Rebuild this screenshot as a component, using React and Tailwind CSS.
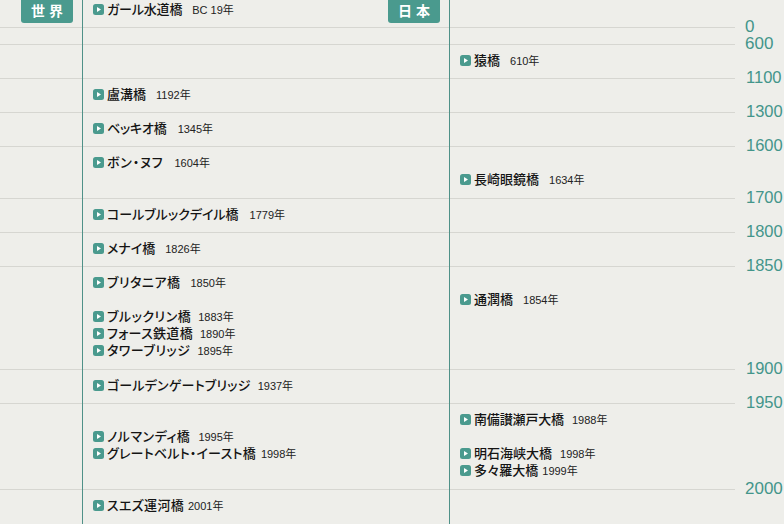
import React from "react";

const num = "ml-[10px] text-[17px]";
const one = "ml-[11px] text-[16.5px]";

const rows = [
  { h: "h-[28px]", year: "0", yc: num, world: { pt: "pt-[2px]", items: [{ name: "ガール水道橋", year: "BC 19年", ml: "ml-[10px]", tr: "tracking-[-0.2px]" }] }, badge: true },
  { h: "h-[17px]", year: "600", yc: num },
  { h: "h-[34px]", year: "1100", yc: one, japan: { pt: "pt-[8px]", items: [{ name: "猿橋", year: "610年", ml: "ml-[10px]" }] } },
  { h: "h-[34px]", year: "1300", yc: one, world: { pt: "pt-[8px]", items: [{ name: "盧溝橋", year: "1192年", ml: "ml-[10px]" }] } },
  { h: "h-[34px]", year: "1600", yc: one, world: { pt: "pt-[8px]", items: [{ name: "ベッキオ橋", year: "1345年", ml: "ml-[11px]", tr: "tracking-[-0.2px]" }] } },
  {
    h: "h-[52px]",
    year: "1700",
    yc: one,
    world: { pt: "pt-[8px]", items: [{ name: "ボン・ヌフ", year: "1604年", ml: "ml-[11px]", tr: "tracking-[0.8px]" }] },
    japan: { pt: "pt-[25px]", items: [{ name: "長崎眼鏡橋", year: "1634年", ml: "ml-[10px]" }] },
  },
  { h: "h-[34px]", year: "1800", yc: one, world: { pt: "pt-[8px]", items: [{ name: "コールブルックデイル橋", year: "1779年", ml: "ml-[11px]" }] } },
  { h: "h-[34px]", year: "1850", yc: one, world: { pt: "pt-[8px]", items: [{ name: "メナイ橋", year: "1826年", ml: "ml-[10px]" }] } },
  {
    h: "h-[103px]",
    year: "1900",
    yc: one,
    world: {
      pt: "pt-[8px]",
      items: [
        { name: "ブリタニア橋", year: "1850年", ml: "ml-[10px]", tr: "tracking-[0.5px]" },
        { name: "ブルックリン橋", year: "1883年", ml: "ml-[7px]", mt: "mt-[17px]", tr: "tracking-[0.5px]" },
        { name: "フォース鉄道橋", year: "1890年", ml: "ml-[7px]", tr: "tracking-[0.3px]" },
        { name: "タワーブリッジ", year: "1895年", ml: "ml-[7px]", tr: "tracking-[0.5px]" },
      ],
    },
    japan: { pt: "pt-[25px]", items: [{ name: "通潤橋", year: "1854年", ml: "ml-[10px]" }] },
  },
  { h: "h-[34px]", year: "1950", yc: one, world: { pt: "pt-[8px]", items: [{ name: "ゴールデンゲートブリッジ", year: "1937年", ml: "ml-[7px]", tr: "tracking-[0.2px]" }] } },
  {
    h: "h-[86px]",
    year: "2000",
    yc: num,
    world: {
      pt: "pt-[25px]",
      items: [
        { name: "ノルマンディ橋", year: "1995年", ml: "ml-[8px]", tr: "tracking-[0.5px]" },
        { name: "グレートベルト・イースト橋", year: "1998年", ml: "ml-[5px]", tr: "tracking-[0.2px]" },
      ],
    },
    japan: {
      pt: "pt-[8px]",
      items: [
        { name: "南備讃瀬戸大橋", year: "1988年", ml: "ml-[8px]", tr: "tracking-[-0.15px]" },
        { name: "明石海峡大橋", year: "1998年", ml: "ml-[8px]", mt: "mt-[17px]" },
        { name: "多々羅大橋", year: "1999年", ml: "ml-[4px]" },
      ],
    },
  },
  { h: "h-[34px]", world: { pt: "pt-[8px]", items: [{ name: "スエズ運河橋", year: "2001年", ml: "ml-[4px]", tr: "tracking-[0.3px]" }] }, last: true },
];

const Bridge = ({ item }) => (
  <div className={`flex items-center h-[17px] ${item.mt || ""}`}>
    <svg width="11" height="11" viewBox="0 0 11 11" className="shrink-0 mb-[2px]">
      <rect width="11" height="11" rx="2.5" fill="#4a9a8e" />
      <path d="M4 3 L8 5.5 L4 8 Z" fill="#fff" />
    </svg>
    <span className={`ml-[3px] mb-[1px] text-[13px] font-medium text-[#141414] whitespace-nowrap [font-feature-settings:'palt'] ${item.tr || ""}`}>{item.name}</span>
    <span className={`${item.ml} text-[11px] text-[#222] whitespace-nowrap`}>{item.year}</span>
  </div>
);

const Cell = ({ data, border, children }) => (
  <div className={`flex justify-between ${border}`}>
    <div className={`flex flex-col ${data ? data.pt : ""} pl-[10px]`}>
      {data && data.items.map((item) => <Bridge key={item.name} item={item} />)}
    </div>
    {children}
  </div>
);

const Badge = ({ children }) => (
  <div className="flex items-center justify-center w-[52px] h-[23px] mr-[9px] rounded-b-[3px] bg-[#4a9a8e] text-white text-[14px] font-bold tracking-[4px] indent-[4px]">
    {children}
  </div>
);

export default function App() {
  return (
    <div
      className="w-[784px] h-[524px] overflow-hidden bg-[#eeeeea]"
      style={{ fontFamily: '"Liberation Sans", "Noto Sans CJK JP", sans-serif' }}
    >
      {rows.map((row, i) => {
        const border = row.last ? "" : "border-b border-[#d6d6d1]";
        return (
          <div key={i} className={`flex ${row.h}`}>
            <div className="w-[735px] shrink-0 grid grid-cols-[82px_1px_366px_1px_285px]">
              <div className={`flex justify-end ${border}`}>{row.badge && <Badge>世界</Badge>}</div>
              <div className="bg-[#4f9188]" />
              <Cell data={row.world} border={border}>
                {row.badge && <Badge>日本</Badge>}
              </Cell>
              <div className="bg-[#4f9188]" />
              <Cell data={row.japan} border={border} />
            </div>
            {row.year && (
              <div className={`self-end mb-[-7px] h-[17px] leading-[17px] text-[#43958a] whitespace-nowrap relative ${row.yc}`}>
                {row.year}
              </div>
            )}
          </div>
        );
      })}
    </div>
  );
}
